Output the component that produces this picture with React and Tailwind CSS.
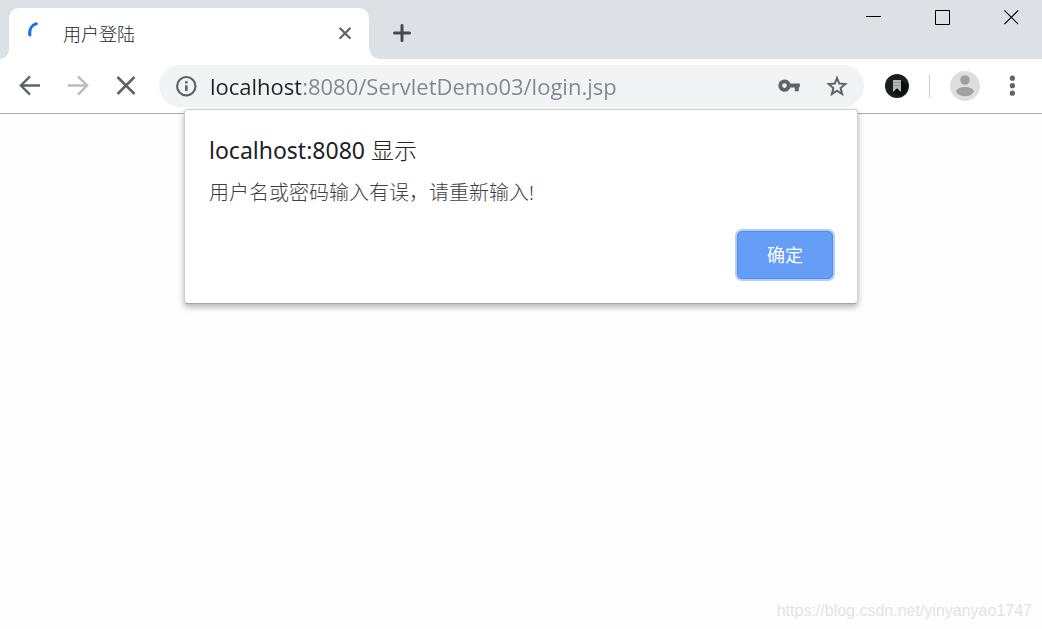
import { useState } from 'react';

function TabStrip() {
  return (
    <header className="flex h-[59px] items-start justify-between bg-[#dde0e5]">
      <div className="flex items-end pt-2">
        {/* Left foot of the tab */}
        <svg className="h-[51px] w-[9px]" viewBox="0 0 9 51" aria-hidden="true">
          <path d="M0 51 C6 50 9 46 9 40 V51 Z" fill="#fff" />
        </svg>
        <div className="flex h-[51px] w-[360px] items-center rounded-t-[10px] bg-white pr-4 pl-[18px]">
          <svg className="h-6 w-6" viewBox="0 0 24 24" fill="none" aria-hidden="true">
            <path d="M2.8 12.8 C2.2 7.5 4.8 3 9.2 1.8" stroke="#1a73e8" strokeWidth="3.2" strokeLinecap="round" />
          </svg>
          <span className="ml-3 flex-1 text-[18px] leading-6 font-light text-[#202124]">用户登陆</span>
          <button type="button" aria-label="关闭标签页" className="h-4 w-4">
            <svg viewBox="0 0 16 16" fill="none" stroke="#5f6368" strokeWidth="2.3" strokeLinecap="round">
              <path d="M3.3 2.5 12.8 12 M12.8 2.5 3.3 12" />
            </svg>
          </button>
        </div>
        <svg className="h-[51px] w-[12px]" viewBox="0 0 12 51" aria-hidden="true">
          <path d="M0 51 V39 C0 46 5 51 12 51 Z" fill="#fff" />
        </svg>
        <button type="button" aria-label="新建标签页" className="mb-4 ml-3 h-5 w-5">
          <svg viewBox="0 0 20 20" fill="none" stroke="#46494d" strokeWidth="3" strokeLinecap="round">
            <path d="M1.5 10 H16.5 M9 2.5 V17.5" />
          </svg>
        </button>
      </div>

      {/* Window controls */}
      <div className="flex gap-[54px] pt-[10px] pr-[23px]">
        <button type="button" aria-label="最小化" className="h-[15px] w-[15px]">
          <svg viewBox="0 0 15 15" stroke="#000"><path d="M0 6.5 H15" /></svg>
        </button>
        <button type="button" aria-label="最大化" className="h-[15px] w-[15px]">
          <svg viewBox="0 0 15 15" fill="none" stroke="#000"><path d="M.5 .5 H14.5 V14.5 H.5 Z" /></svg>
        </button>
        <button type="button" aria-label="关闭" className="h-[15px] w-[15px]">
          <svg viewBox="0 0 15 15" stroke="#000" strokeWidth="1.1"><path d="M.4 .4 14.2 14.2 M14.2 .4 .4 14.2" /></svg>
        </button>
      </div>
    </header>
  );
}

function Toolbar() {
  const [url, setUrl] = useState('localhost:8080/ServletDemo03/login.jsp');

  return (
    <div className="flex h-[55px] items-center border-b border-[#adadad] bg-white pr-[18px] pl-[15px]">
      <div className="flex gap-[18px] pr-[18px]">
        <button type="button" aria-label="后退" className="h-[30px] w-[30px]">
          <svg viewBox="0 0 30 30" fill="none" stroke="#5f6368" strokeWidth="2.4">
            <path d="M25 14.5 H6.5 M15 5.3 5.9 14.5 15 23.7" />
          </svg>
        </button>
        <button type="button" aria-label="前进" className="h-[30px] w-[30px]">
          <svg viewBox="0 0 30 30" fill="none" stroke="#babcbe" strokeWidth="2.4">
            <path d="M5 14.5 H23.5 M15 5.3 24.1 14.5 15 23.7" />
          </svg>
        </button>
        <button type="button" aria-label="停止加载" className="h-[30px] w-[30px]">
          <svg viewBox="0 0 30 30" fill="none" stroke="#5f6368" strokeWidth="2.6">
            <path d="M6.5 6 23.5 23 M23.5 6 6.5 23" />
          </svg>
        </button>
      </div>

      <div className="flex h-[42px] min-w-0 flex-1 items-center rounded-full bg-[#f1f3f4] px-[15px]">
        <button type="button" aria-label="查看网站信息" className="h-6 w-6">
          <svg viewBox="0 0 24 24" fill="none" stroke="#5f6368" strokeWidth="2.2">
            <circle cx="12.3" cy="12.2" r="9.2" />
            <path d="M12.3 11.2 V17 M12.3 7.2 V9.4" strokeWidth="2.6" />
          </svg>
        </button>
        {/* The host part is darker than the rest of the address */}
        <input
          type="text"
          aria-label="地址"
          value={url}
          onChange={(e) => setUrl(e.target.value)}
          className="ml-3 min-w-0 flex-1 bg-linear-to-r from-[#202124] from-[91px] to-[#80868b] to-[91px] bg-clip-text font-['Open_Sans',sans-serif] text-[22px] leading-8 text-transparent outline-none"
        />
        <div className="flex gap-6">
          <button type="button" aria-label="密码" className="h-6 w-6">
            <svg viewBox="0 0 24 24" fill="#5f6368">
              <path
                fillRule="evenodd"
                d="M7.5 5.4 A6.2 6.2 0 0 1 13.3 9.4 H22.8 V13.2 H21.8 V17.2 H17.8 V13.6 H13.4 A6.2 6.2 0 1 1 7.5 5.4 Z M7.5 9.3 A2.3 2.3 0 1 0 7.5 13.9 A2.3 2.3 0 1 0 7.5 9.3 Z"
              />
            </svg>
          </button>
          <button type="button" aria-label="收藏" className="h-6 w-6">
            <svg viewBox="0 0 24 24" fill="none" stroke="#5f6368" strokeWidth="2">
              <path d="M12 4 L14.2 9.6 L20.3 10.1 L15.6 14 L17.1 20 L12 16.7 L6.9 20 L8.4 14 L3.7 10.1 L9.8 9.6 Z" />
            </svg>
          </button>
        </div>
      </div>

      <div className="flex items-center gap-5 pl-[21px]">
        <button type="button" aria-label="书签扩展" className="h-6 w-6">
          <svg viewBox="0 0 24 24">
            <circle cx="12" cy="12" r="12" fill="#1b1d21" />
            <path d="M16 6 23 12 A12 12 0 0 1 16 22 L8 18 Z" fill="#0d0e10" />
            <path d="M8 6 H16 V18 L12 14.2 8 18 Z" fill="#b5b5b5" />
            <path d="M8 8.5 H16 M8 11.5 H16" stroke="#999" />
          </svg>
        </button>
        <div className="h-6 w-px bg-[#cdcfd1]" />
        <button type="button" aria-label="用户" className="h-[30px] w-[30px]">
          <svg viewBox="0 0 30 30">
            <circle cx="15" cy="15" r="15" fill="#dedede" />
            <circle cx="15" cy="9" r="4.8" fill="#a0a0a0" />
            <path d="M6 20.8 C6 17.5 11 16 15 16 S24 17.5 24 20.8 C22 23.8 19 25.3 15 25.3 S8 23.8 6 20.8 Z" fill="#a0a0a0" />
          </svg>
        </button>
        <button type="button" aria-label="菜单" className="h-6 w-6">
          <svg viewBox="0 0 24 24" fill="#5f6368">
            <circle cx="12.4" cy="4.2" r="2.6" />
            <circle cx="12.4" cy="11.7" r="2.6" />
            <circle cx="12.4" cy="19.2" r="2.6" />
          </svg>
        </button>
      </div>
    </div>
  );
}

function AlertDialog({ onClose }) {
  return (
    <div
      role="alertdialog"
      aria-labelledby="alert-title"
      aria-describedby="alert-message"
      className="absolute inset-x-0 -top-[5px] mx-auto w-full max-w-[674px] rounded-[4px] border border-[#cfcfcf] border-b-[#a5a5a5] bg-white px-6 pt-6 pb-6 shadow-[0_3px_6px_rgba(0,0,0,0.3)]"
    >
      <h1 id="alert-title" className="text-[23px] leading-8 text-[#202124]">
        localhost:8080 <span className="font-light">显示</span>
      </h1>
      <p id="alert-message" className="mt-3 text-[20px] leading-[30px] font-light text-[#3c4043]">用户名或密码输入有误，请重新输入!</p>
      <div className="mt-[23px] flex justify-end">
        <button
          type="button"
          onClick={onClose}
          className="h-12 w-24 rounded-[5px] border border-[#4d8df6] bg-[#669df6] text-[18px] leading-6 text-white ring-2 ring-[#b5cdf8]"
        >
          确定
        </button>
      </div>
    </div>
  );
}

export default function App() {
  const [alertOpen, setAlertOpen] = useState(true);

  return (
    <div className="flex min-h-screen flex-col bg-[#fefefe] font-['Noto_Sans','Noto_Sans_CJK_SC',sans-serif]">
      <TabStrip />
      <Toolbar />
      <main className="relative flex flex-1 items-end justify-end px-[10px] pb-2">
        {alertOpen && <AlertDialog onClose={() => setAlertOpen(false)} />}
        <p className="font-['Liberation_Sans',sans-serif] text-[16px] leading-5 text-[#e3e3e3]">
          https://blog.csdn.net/yinyanyao1747
        </p>
      </main>
    </div>
  );
}
